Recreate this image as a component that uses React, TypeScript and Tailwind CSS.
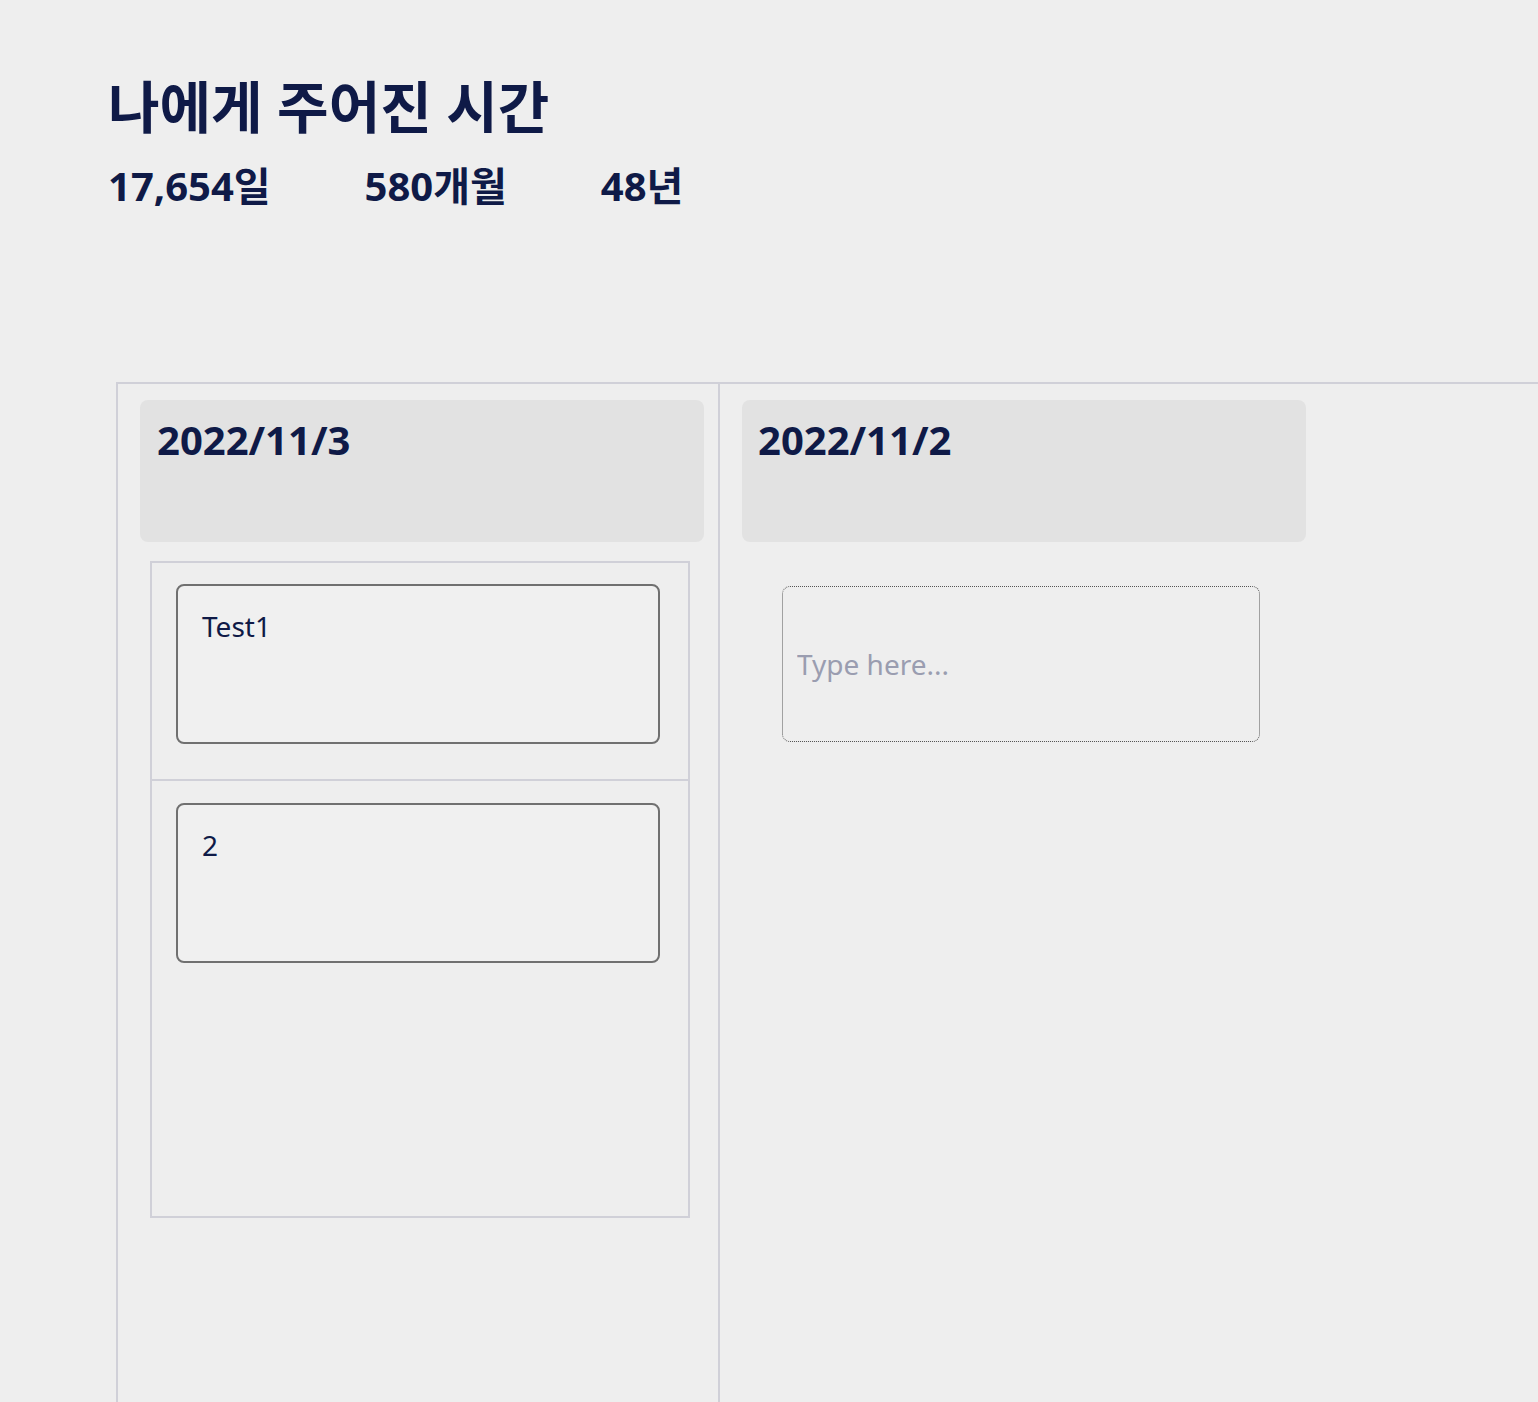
import React from "react";

const font = { fontFamily: '"Noto Sans", "Noto Sans CJK KR", sans-serif' };

export default function App() {
  return (
    <div
      className="h-[1402px] w-full overflow-hidden bg-[#eeeeee] text-[#0f1a47]"
      style={font}
    >
      <header className="pl-[108px] pt-[70px]">
        <h1 className="text-[56px] font-bold leading-[72px]">
          나에게 주어진 시간
        </h1>
        <div className="mt-[20px] flex gap-[94px] text-[40px] font-bold leading-[48px]">
          <span>17,654일</span>
          <span>580개월</span>
          <span>48년</span>
        </div>
      </header>

      <div className="ml-[116px] mt-[172px] flex h-[1100px] border-l-2 border-t-2 border-[#d0d0d8]">
        <section className="w-[600px] shrink-0">
          <div className="ml-[22px] mt-[16px] h-[142px] w-[564px] rounded-lg bg-[#e2e2e2] px-[17px] pt-[15px]">
            <h2 className="text-[40px] font-bold leading-[50px]">2022/11/3</h2>
          </div>
          <div className="ml-[32px] mt-[19px] h-[657px] w-[540px] border-2 border-[#d0d0d8]">
            <div className="border-b-2 border-[#d0d0d8] pb-[35px] pl-[24px] pt-[21px]">
              <textarea
                readOnly
                value="Test1"
                className="block h-[160px] w-[484px] resize-none rounded-lg border-2 border-[#707070] bg-[#f0f0f0] px-[24px] pt-[20px] text-[28px] leading-[40px] text-[#0f1a47] outline-none"
                style={font}
              />
            </div>
            <div className="pl-[24px] pt-[22px]">
              <textarea
                readOnly
                value="2"
                className="block h-[160px] w-[484px] resize-none rounded-lg border-2 border-[#707070] bg-[#f0f0f0] px-[24px] pt-[20px] text-[28px] leading-[40px] text-[#0f1a47] outline-none"
                style={font}
              />
            </div>
          </div>
        </section>
        <section className="flex-1 border-l-2 border-[#d0d0d8]">
          <div className="ml-[22px] mt-[16px] h-[142px] w-[564px] rounded-lg bg-[#e2e2e2] px-[16px] pt-[15px]">
            <h2 className="text-[40px] font-bold leading-[50px]">2022/11/2</h2>
          </div>
          <div className="ml-[62px] mt-[44px]">
            <input
              placeholder="Type here..."
              className="block h-[156px] w-[478px] rounded-lg border border-dotted border-[#555555] bg-transparent px-[14px] text-[28px] text-[#0f1a47] outline-none placeholder:text-[#9a9db0]"
              style={font}
            />
          </div>
        </section>
      </div>
    </div>
  );
}
